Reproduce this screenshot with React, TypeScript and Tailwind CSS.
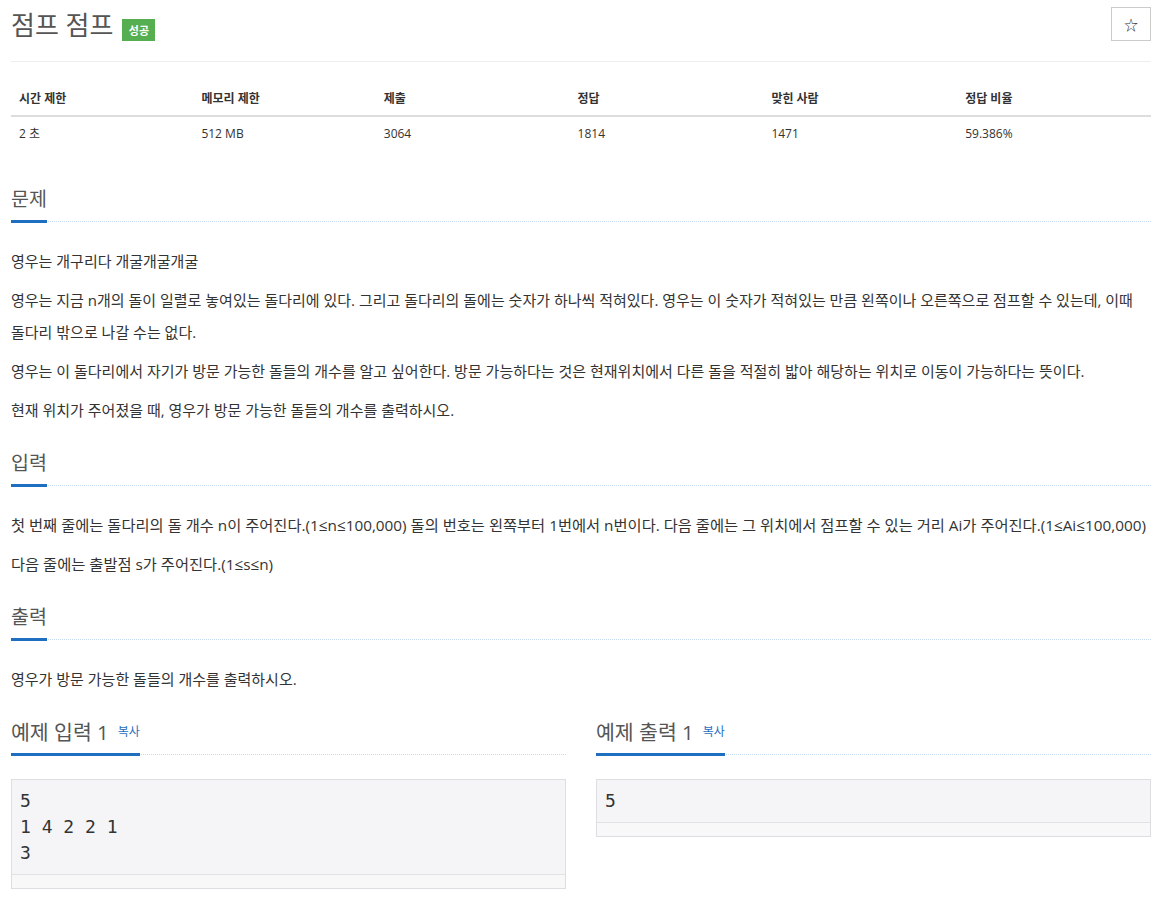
import React from "react";

const FONT = { fontFamily: '"Open Sans", "Noto Sans CJK KR", sans-serif' };
const MONO = { fontFamily: '"DejaVu Sans Mono", "Noto Sans CJK KR", monospace' };

function Headline({ children, big }: { children: React.ReactNode; big?: boolean }) {
  return (
    <div className="border-b border-dotted border-[#c6dbf0]">
      <h2
        className={`inline-block mb-[-2px] pb-[9px] border-b-[3px] border-[#1f6fc0] leading-[24px] text-[#555] font-normal ${
          big ? "text-[20.5px]" : "text-[19.5px]"
        }`}
      >
        {children}
      </h2>
    </div>
  );
}

function Section({ title, paras, wide }: { title: string; paras: string[]; wide?: boolean }) {
  return (
    <section className="flex flex-col">
      <Headline>{title}</Headline>
      <div className="mt-[23px] flex flex-col gap-[7px]">
        {paras.map((p, i) => (
          <p
            key={i}
            className={`leading-[32px] text-[#333] break-keep ${wide ? "text-[15.3px]" : "text-[15px]"}`}
          >
            {p}
          </p>
        ))}
      </div>
    </section>
  );
}

function Sample({ title, lines }: { title: string; lines: string }) {
  return (
    <div className="flex flex-col">
      <Headline big>
        {title}
        <button className="ml-[9px] text-[12px] leading-[14px] text-[#1f6fc0] align-[4px]">복사</button>
      </Headline>
      <div className="mt-[24px] border border-[#dedee2] bg-[#f5f5f7]">
        <pre className="px-[8px] py-[8px] text-[18px] leading-[26px] text-[#333] whitespace-pre" style={MONO}>
          {lines}
        </pre>
        <div className="h-[14px] border-t border-[#e2e2e6] bg-[#f8f8f9]" />
      </div>
    </div>
  );
}

export default function App() {
  const cols = [
    ["시간 제한", "2 초"],
    ["메모리 제한", "512 MB"],
    ["제출", "3064"],
    ["정답", "1814"],
    ["맞힌 사람", "1471"],
    ["정답 비율", "59.386%"],
  ];
  const widths = ["w-[16%]", "w-[16%]", "w-[17%]", "w-[17%]", "w-[17%]", "w-[17%]"];
  return (
    <div className="bg-white min-h-[901px] text-[#333]" style={FONT}>
      <div className="ml-[11px] w-[1140px] flex flex-col">
        {/* Title */}
        <div className="h-[62px] border-b border-[#eeeeee] flex items-start justify-between">
          <div className="flex items-center pt-[9px]">
            <h1 className="text-[26px] leading-[32px] text-[#555] font-normal">점프 점프</h1>
            <span className="ml-[9px] mt-[10px] h-[22px] w-[33px] flex items-center justify-center bg-[#55ae4f] text-white text-[11px] font-bold leading-none">
              성공
            </span>
          </div>
          <button className="mt-[7px] w-[40px] h-[34px] border border-[#cccccc] bg-white flex items-center justify-center text-[14px] text-[#333]">
            ☆
          </button>
        </div>

        {/* Table */}
        <table className="mt-[20px] w-full border-collapse table-fixed">
          <thead>
            <tr className="border-b-2 border-[#dddddd]">
              {cols.map((c, i) => (
                <th key={i} className={`${widths[i]} text-left px-[8px] h-[34px] text-[12px] font-bold text-[#333]`}>
                  {c[0]}
                </th>
              ))}
            </tr>
          </thead>
          <tbody>
            <tr>
              {cols.map((c, i) => (
                <td key={i} className="text-left px-[8px] h-[34px] text-[12px] text-[#333]">
                  {c[1]}
                </td>
              ))}
            </tr>
          </tbody>
        </table>

        <div className="mt-[37px] flex flex-col gap-[25px]">
          <Section
            title="문제"
            paras={[
              "영우는 개구리다 개굴개굴개굴",
              "영우는 지금 n개의 돌이 일렬로 놓여있는 돌다리에 있다. 그리고 돌다리의 돌에는 숫자가 하나씩 적혀있다. 영우는 이 숫자가 적혀있는 만큼 왼쪽이나 오른쪽으로 점프할 수 있는데, 이때 돌다리 밖으로 나갈 수는 없다.",
              "영우는 이 돌다리에서 자기가 방문 가능한 돌들의 개수를 알고 싶어한다. 방문 가능하다는 것은 현재위치에서 다른 돌을 적절히 밟아 해당하는 위치로 이동이 가능하다는 뜻이다.",
              "현재 위치가 주어졌을 때, 영우가 방문 가능한 돌들의 개수를 출력하시오.",
            ]}
          />
          <Section
            title="입력"
            wide
            paras={[
              "첫 번째 줄에는 돌다리의 돌 개수 n이 주어진다.(1≤n≤100,000) 돌의 번호는 왼쪽부터 1번에서 n번이다. 다음 줄에는 그 위치에서 점프할 수 있는 거리 Ai가 주어진다.(1≤Ai≤100,000)",
              "다음 줄에는 출발점 s가 주어진다.(1≤s≤n)",
            ]}
          />
          <Section title="출력" paras={["영우가 방문 가능한 돌들의 개수를 출력하시오."]} />
          <div className="grid grid-cols-2 gap-[30px] items-start">
            <Sample title="예제 입력 1" lines={"5\n1 4 2 2 1\n3"} />
            <Sample title="예제 출력 1" lines={"5"} />
          </div>
        </div>
      </div>
    </div>
  );
}
